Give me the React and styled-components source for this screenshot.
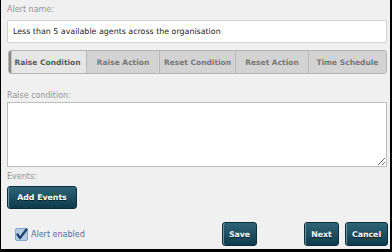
import React, { useState } from 'react'
import styled, { createGlobalStyle } from 'styled-components'

const GlobalStyle = createGlobalStyle`
  html, body {
    margin: 0;
    padding: 0;
    background: #f0f0f0;
  }
  * {
    box-sizing: border-box;
  }
`

const tabs = [
  { label: 'Raise Condition', width: 78 },
  { label: 'Raise Action', width: 73 },
  { label: 'Reset Condition', width: 76 },
  { label: 'Reset Action', width: 73 },
  { label: 'Time Schedule', width: 77 },
]

const App = () => {
  const [active, setActive] = useState(0)
  const [name, setName] = useState('Less than 5 available agents across the organisation')
  const [enabled, setEnabled] = useState(true)

  return (
    <>
      <GlobalStyle />
      <Dialog>
        <Label $bottom={5}>Alert name:</Label>
        <NameInput value={name} onChange={e => setName(e.target.value)} />

        <TabBar>
          {tabs.map((t, i) => (
            <Tab key={t.label} $w={t.width} $active={i === active} onClick={() => setActive(i)}>{t.label}</Tab>
          ))}
        </TabBar>

        <Label $top={16} $bottom={1}>Raise condition:</Label>
        <Condition />

        <Label $top={4} $bottom={4}>Events:</Label>
        <Button $w={70} $h={23}>Add Events</Button>

        <Footer>
          <Check onClick={() => setEnabled(!enabled)}>
            <svg width="13" height="13" viewBox="0 0 13 13">
              <rect x="0.5" y="0.5" width="12" height="12" rx="1.5" fill="#b3cce2" stroke="#86a6c6" />
              {enabled && <path d="M2.5 6.5 L5 10 L11.5 1.5" fill="none" stroke="#1d3f6e" strokeWidth="2.2" strokeLinecap="round" strokeLinejoin="round" />}
            </svg>
            Alert enabled
          </Check>
          <Spacer />
          <Button $w={35}>Save</Button>
          <Button $w={35} $left={47}>Next</Button>
          <Button $w={43} $left={6}>Cancel</Button>
        </Footer>
      </Dialog>
    </>
  )
}

const Dialog = styled.div`
  width: 392px;
  height: 252px;
  background: #f0f0f0;
  border-left: 1px solid #000;
  border-right: 2px solid #000;
  border-bottom: 3px solid #000;
  padding: 4px 2px 0 6px;
  display: flex;
  flex-direction: column;
  font-family: 'DejaVu Sans', Verdana, sans-serif;
`

const Label = styled.div`
  font-size: 8px;
  color: #949494;
  line-height: 11px;
  margin-top: ${props => props.$top || 0}px;
  margin-bottom: ${props => props.$bottom || 0}px;
`

const NameInput = styled.input`
  width: 380px;
  height: 23px;
  border: 1px solid #d2d2d2;
  border-radius: 2px;
  background: #fff;
  padding: 0 5px;
  font-family: 'DejaVu Sans', Verdana, sans-serif;
  font-size: 7.9px;
  color: #1e1e1e;
  outline: none;
`

const TabBar = styled.div`
  display: flex;
  margin: 7px 0 0 1px;
  width: 379px;
  height: 24px;
  border: 1px solid #b4b4b4;
  border-radius: 3px;
  background: #d3d3d3;
  overflow: hidden;
  box-shadow: inset 1px 0 0 #eaeaea;
`

const Tab = styled.div`
  flex: 0 0 ${props => props.$w}px;
  display: flex;
  align-items: center;
  justify-content: center;
  font-size: 7.5px;
  font-weight: bold;
  color: ${props => props.$active ? '#5a5a5a' : '#777'};
  background: ${props => props.$active ? '#e6e6e6' : '#d3d3d3'};
  border-right: 1px solid #b9b9b9;
  box-shadow: ${props => props.$active ? 'inset 2px 0 0 #8a8a8a, inset 3px 0 0 #c4c4c4' : 'none'};
  cursor: pointer;
  white-space: nowrap;
  &:last-child {
    border-right: none;
  }
`

const Condition = styled.textarea`
  width: 380px;
  height: 65px;
  border: 1px solid #bdbdbd;
  background: #fff;
  resize: both;
  outline: none;
  margin: 0;
`

const Button = styled.button`
  width: ${props => props.$w}px;
  height: ${props => props.$h || 24}px;
  margin-left: ${props => props.$left || 0}px;
  padding: 0;
  border: 1px solid #0c2e3a;
  border-radius: 3px;
  background: linear-gradient(#2e6477, #0e3b4b);
  box-shadow: inset 1px 0 0 #6f929e;
  color: #fff;
  font-family: 'DejaVu Sans', Verdana, sans-serif;
  font-size: 7.8px;
  font-weight: bold;
  text-shadow: 0 1px 0 #062029;
  cursor: pointer;
`

const Footer = styled.div`
  display: flex;
  align-items: center;
  margin-top: 13px;
`

const Check = styled.label`
  display: flex;
  align-items: center;
  gap: 3px;
  margin-left: 8px;
  font-size: 8px;
  color: #4171a8;
  cursor: pointer;
`

const Spacer = styled.div`
  flex: 1;
`

export default App
